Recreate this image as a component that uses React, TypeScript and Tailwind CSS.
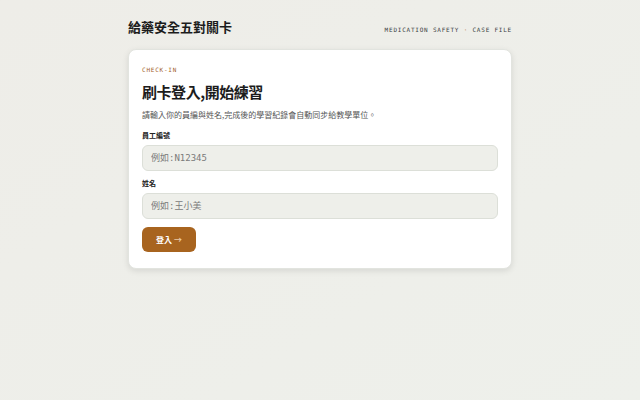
const cjk = "font-['Noto_Sans_CJK_TC','Noto_Sans',sans-serif]";
const mono = "font-['DejaVu_Sans_Mono','Noto_Sans_CJK_TC',monospace]";

const Field = ({label, placeholder}: {label: string, placeholder: string}) => {
  return (
    <div className="flex flex-col">
      <label className={`${cjk} text-[7px] font-bold text-[#222] leading-[8px] mb-[6px]`}>{label}</label>
      <input
        placeholder={placeholder}
        className={`${mono} h-[26px] w-full rounded-[6px] border border-[#dcdfd8] bg-[#eeefea] px-[8px] text-[9px] text-[#333] placeholder:text-[#7a7a7a]`}
      />
    </div>
  );
};

export default function App() {
  return (
    <div className="min-h-[400px] w-full bg-gradient-to-br from-[#eeede8] to-[#eef0eb]">
      <div className="mx-auto w-[384px] pt-[17px]">
        <div className="flex items-center justify-between h-[20px]">
          <h1 className={`${cjk} text-[13px] font-bold text-[#1c1c1c]`}>給藥安全五對關卡</h1>
          <div className={`${mono} text-[6px] tracking-[0.13em] text-[#3a3f44] pt-[4px]`}>
            MEDICATION SAFETY <span className="text-[#b06a2a]">·</span> CASE FILE
          </div>
        </div>
        <div className="mt-[12px] rounded-[8px] border border-[#e2e4df] bg-white px-[13px] pt-[17px] pb-[16px] shadow-[0_2px_6px_rgba(0,0,0,0.10)]">
          <div className={`${mono} text-[6px] tracking-[0.13em] text-[#a3622a] leading-[6px]`}>CHECK-IN</div>
          <h2 className={`${cjk} mt-[9px] text-[15px] font-bold tracking-[-0.03em] text-[#1c1c1c] leading-[20px]`}>刷卡登入,開始練習</h2>
          <p className={`${cjk} mt-[7px] text-[8px] text-[#555] leading-[12px]`}>請輸入你的員編與姓名,完成後的學習紀錄會自動同步給教學單位。</p>
          <div className="mt-[10px] flex flex-col gap-[8px]">
            <Field label="員工編號" placeholder="例如:N12345" />
            <Field label="姓名" placeholder="例如:王小美" />
          </div>
          <button className={`${cjk} mt-[8px] h-[25px] w-[54px] rounded-[6px] bg-[#a8641f] text-[8px] font-bold text-white`}>
            登入 <span className="text-[#e8c9a6]">→</span>
          </button>
        </div>
      </div>
    </div>
  );
}
